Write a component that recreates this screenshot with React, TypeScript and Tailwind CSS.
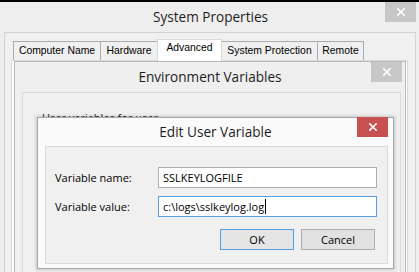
import React from "react";

function CloseX({ className }: { className?: string }) {
  return (
    <svg width="8" height="8" viewBox="0 0 8 8" className={className}>
      <path d="M0.8 0.8 L7.2 7.2 M7.2 0.8 L0.8 7.2" stroke="white" strokeWidth="1.6" strokeLinecap="square" />
    </svg>
  );
}

const tabs = [
  { label: "Computer Name", w: "w-[88px]" },
  { label: "Hardware", w: "w-[58px]" },
  { label: "Advanced", w: "w-[65px]", active: true },
  { label: "System Protection", w: "w-[97px]" },
  { label: "Remote", w: "w-[47px]" },
];

export default function App() {
  return (
    <div className="relative w-[419px] h-[272px] overflow-hidden bg-[#eeeeee] font-['Open_Sans',sans-serif] text-[#1e1e1e]">
      <div className="h-[2px] bg-black" />
      {/* System Properties title bar */}
      <div className="relative h-[30px] flex items-center justify-center">
        <span className="text-[13.6px] leading-none pl-[2px]">System Properties</span>
        <div className="absolute right-[3px] top-0 w-[31px] h-[20px] bg-[#c7c7c7] flex items-center justify-center">
          <CloseX />
        </div>
      </div>
      {/* System Properties body */}
      <div className="ml-[4px] w-[412px] h-[250px] border border-[#d2d2d2] bg-[#f0f0f0] pt-[6px] pl-[8px]">
        <div className="flex items-end h-[21px] font-['Liberation_Sans',sans-serif] text-[10.4px] text-black">
          {tabs.map((t, i) =>
            t.active ? (
              <div
                key={t.label}
                className={`${t.w} -ml-px h-[22px] mb-[-1px] relative z-10 bg-white border border-b-0 border-[#d9d9d9] flex justify-center pt-[3px] leading-none`}
              >
                {t.label}
              </div>
            ) : (
              <div
                key={t.label}
                className={`${t.w} ${i === 0 ? "" : "-ml-px"} h-[19px] bg-[#f0f0f0] border border-b-0 border-[#acacac] flex items-center justify-center leading-none pt-px`}
              >
                {t.label}
              </div>
            )
          )}
        </div>
        <div className="ml-[-2px] w-[397px] h-[220px] border border-[#d9d9d9] bg-white" />
      </div>

      {/* Environment Variables window */}
      <div className="absolute left-[14px] top-[61px] w-[392px] h-[230px] border border-[#b9b9b9] bg-[#efefef] flex flex-col">
        <div className="relative h-[30px] flex items-center justify-center shrink-0">
          <span className="text-[13.6px] leading-none">Environment Variables</span>
          <div className="absolute right-[3px] top-0 w-[31px] h-[20px] bg-[#c7c7c7] flex items-center justify-center">
            <CloseX />
          </div>
        </div>
        <div className="ml-[7px] w-[379px] flex-1 border border-[#d9d9d9] bg-[#f0f0f0] pt-[19px] pl-[19px]">
          <div className="text-[11px] leading-none">User variables for user</div>
        </div>
      </div>

      {/* Edit User Variable dialog */}
      <div className="absolute left-[37px] top-[117px] w-[357px] h-[152px] border border-[#a8a8a8] bg-[#fafafa] shadow-[0_0_3px_1px_rgba(0,0,0,0.18)] flex flex-col">
        <div className="relative h-[28px] flex items-center justify-center shrink-0">
          <span className="text-[13.6px] leading-none">Edit User Variable</span>
          <div className="absolute right-[5px] top-[-1px] w-[31px] h-[20px] bg-[#c75050] flex items-center justify-center">
            <CloseX />
          </div>
        </div>
        <div className="ml-[7px] w-[343px] h-[118px] border border-[#dadada] bg-[#f0f0f0] pt-[20px] pl-[9px] pr-[10px] flex flex-col text-[11px] text-black">
          <div className="flex items-center h-[21px]">
            <div className="w-[103px] leading-none">Variable name:</div>
            <div className="w-[219px] h-[21px] border border-[#abadb3] bg-white flex items-center pl-[4px] leading-none">
              SSLKEYLOGFILE
            </div>
          </div>
          <div className="flex items-center h-[21px] mt-[8px]">
            <div className="w-[103px] leading-none">Variable value:</div>
            <div className="w-[219px] h-[21px] border border-[#569de5] bg-white flex items-center pl-[4px] leading-none">
              <span>c:\logs\sslkeylog.log</span>
              <span className="inline-block w-px h-[15px] bg-black ml-px" />
            </div>
          </div>
          <div className="flex justify-end gap-[7px] mt-[12px] mr-[2px]">
            <div className="w-[74px] h-[21px] border border-[#569de5] bg-[#e5e5e5] flex items-center justify-center leading-none">
              OK
            </div>
            <div className="w-[74px] h-[21px] border border-[#adadad] bg-[#e1e1e1] flex items-center justify-center leading-none">
              Cancel
            </div>
          </div>
        </div>
      </div>
    </div>
  );
}
